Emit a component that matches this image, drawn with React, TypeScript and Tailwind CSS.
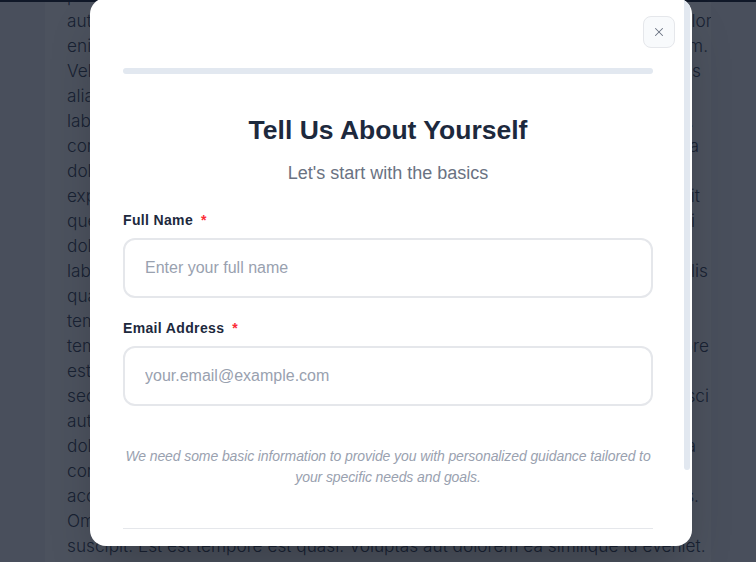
import { X } from "lucide-react"

type Line = { a: string; b?: string; end?: string }

// lines of the page behind the dialog; only the edges peek out
const lines: Line[] = [
  { a: "perspiciatis unde omnis", b: "iste natus", end: "mr-[40px]" },
  { a: "autem voluptatem", b: "quia dolor", end: "mr-0" },
  { a: "enim ipsam", b: "rerum quidem.", end: "mr-1" },
  { a: "Velit officiis", b: "dignissimos", end: "mr-[11px]" },
  { a: "alias nemo", b: "sunt in culpa", end: "mr-[40px]" },
  { a: "laborum dolor", b: "aut.", end: "mr-[18px]" },
  { a: "corrupti quos", b: "sint ea", end: "mr-[13px]" },
  { a: "dolores eos", b: "qui ratione", end: "mr-[40px]" },
  { a: "explicabo nemo", b: "ipsam sit", end: "mr-3" },
  { a: "quem aspernatur", b: "aut nisi", end: "mr-[17px]" },
  { a: "dolor sit amet", b: "consectetur", end: "mr-[40px]" },
  { a: "laboriosam nisi", b: "facilis", end: "mr-1" },
  { a: "quasi architecto", b: "beatae vitae", end: "mr-[40px]" },
  { a: "tempora incidunt", b: "ut labore", end: "mr-[40px]" },
  { a: "tempore magnam", b: "et dolore", end: "mr-[3px]" },
  { a: "est eligendi", b: "optio cumque", end: "mr-[40px]" },
  { a: "secus velit", b: "adipisci", end: "mr-[3px]" },
  { a: "aut fugit", b: "sed quia", end: "mr-[40px]" },
  { a: "dolorum fuga", b: "et ea", end: "mr-4" },
  { a: "corporis suscipit", b: "laboriosam", end: "mr-[40px]" },
  { a: "accusamus et iusto", b: "odio natus.", end: "mr-[13px]" },
  { a: "Omnis voluptas", b: "assumenda est", end: "mr-[40px]" },
]

function Field({ label, placeholder, type = "text" }: { label: string; placeholder: string; type?: string }) {
  return (
    <div className="flex flex-col">
      <label className="text-sm leading-5 font-bold tracking-wide text-slate-800">
        {label}
        <span className="ml-2 text-red-500">*</span>
      </label>
      <input
        type={type}
        placeholder={placeholder}
        className="mt-2 h-[60px] w-full rounded-xl border-2 border-gray-200 bg-white px-5 text-base text-slate-800 placeholder:text-gray-400 outline-none"
      />
    </div>
  )
}

export default function App() {
  return (
    <div className="relative flex h-[562px] w-[756px] flex-col overflow-hidden bg-gray-100">
      {/* page behind */}
      <div className="h-[2px] shrink-0 bg-gray-900" />
      <div className="mx-[45px] flex-1 overflow-hidden bg-white pl-[22px] font-['Inter',sans-serif] text-[17.25px] font-light leading-[25px] text-gray-700">
        <div className="-mt-[19.5px]">
          {lines.map((l, i) => (
            <div key={i} className="flex w-[645px] justify-between whitespace-nowrap">
              <span>{l.a}</span>
              <span className={l.end}>{l.b}</span>
            </div>
          ))}
          <div className="whitespace-nowrap">
            suscipit. Est est tempore est quasi. Voluptas aut dolorem ea similique id eveniet.
          </div>
        </div>
      </div>

      {/* overlay */}
      <div className="absolute inset-0 bg-gray-900/75">
        <div className="relative ml-[90px] -mt-[2px] flex h-[548px] w-[602px] overflow-hidden rounded-2xl bg-white shadow-2xl font-['Liberation_Sans',Arial,sans-serif]">
          <div className="min-w-0 flex-1 overflow-hidden">
            <div className="pl-[33px] pr-[31px] pt-[70px] pb-8">
              <div className="h-1.5 w-full rounded-full bg-[#e2e8f0]" />

              <h2 className="mt-10 text-center text-[26.5px] leading-8 font-bold text-slate-800">
                Tell Us About Yourself
              </h2>
              <p className="mt-[13px] text-center text-lg text-gray-500">Let's start with the basics</p>

              <div className="mt-[23px] flex flex-col gap-5">
                <Field label="Full Name" placeholder="Enter your full name" />
                <Field label="Email Address" placeholder="your.email@example.com" type="email" />
              </div>

              <p className="mt-10 text-center text-sm leading-[21px] tracking-[-0.1px] italic text-gray-400">
                We need some basic information to provide you with personalized guidance tailored to your specific
                needs and goals.
              </p>

              <div className="mt-10 flex items-center justify-between border-t border-gray-200 pt-6">
                <button className="h-12 rounded-xl px-6 text-base font-semibold text-gray-300">Back</button>
                <button className="h-12 rounded-xl bg-gray-200 px-8 text-base font-semibold text-gray-400">
                  Continue
                </button>
              </div>
            </div>
          </div>

          {/* scrollbar */}
          <div className="w-2 shrink-0 pr-[2px]">
            <div className="h-[472px] w-full rounded-full bg-[#e2e8f0]" />
          </div>

          <button className="absolute right-[17px] top-[18px] flex h-8 w-8 items-center justify-center rounded-lg border border-gray-200 bg-slate-50 text-gray-500">
            <X size={14} strokeWidth={1.75} />
          </button>
        </div>
      </div>
    </div>
  )
}
